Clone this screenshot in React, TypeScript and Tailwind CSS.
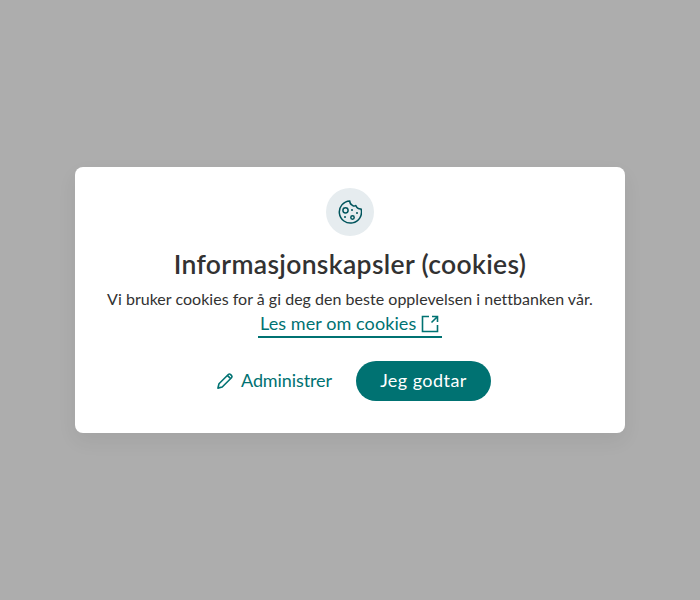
function CookieIcon() {
  return (
    <svg width="24" height="24" viewBox="0 0 24 24" fill="none" stroke="#00545c" strokeWidth="1.5" strokeLinejoin="round">
      <path d="M11.8.9A11.1 11.1 0 1 0 23.1 9Q19.100 9.200 17.800 5.500Q16.200 6.700 14.500 5.400Q11.600 4.200 11.800.9Z" />
      <circle cx="7.500" cy="10.300" r="2.600" />
      <circle cx="14.500" cy="17.500" r="1.700" />
      <g fill="#00545c" stroke="none">
        <circle cx="14" cy="10" r="1" />
        <circle cx="19" cy="13" r="1" />
        <circle cx="7" cy="17" r="1" />
      </g>
    </svg>
  );
}

function ExternalIcon() {
  return (
    <svg width="18" height="18" viewBox="0 0 18 18" fill="none" stroke="#007272" strokeWidth="1.600" className="-ml-px shrink-0">
      <path d="M8 1.500H1.500V16.500H16.500V10M11 1.500H16.500V7M16.300 1.700L10.500 7.500" />
    </svg>
  );
}

function PencilIcon() {
  return (
    <svg width="16" height="16" viewBox="0 0 16 16" fill="none" stroke="#007272" strokeWidth="1.600" strokeLinejoin="round" className="shrink-0 translate-y-px">
      <path d="M.9 15.100L2 10.800L11.300 1.500Q12.300.6 13.400 1.400L14.600 2.600Q15.400 3.700 14.500 4.700L5.200 14ZM10.400 2.400L13.600 5.600" />
    </svg>
  );
}

export default function App() {
  return (
    <div className="flex h-[600px] w-[700px] items-center justify-center bg-[#adadad] font-['Lato','Liberation_Sans',sans-serif] text-[#323232]">
      <div className="flex h-[266px] w-[550px] flex-col items-center rounded-lg bg-white pt-[21px] shadow-[0_8px_20px_rgba(0,0,0,0.06)]">
        <div className="flex size-12 items-center justify-center rounded-full bg-[#e6ecef]">
          <CookieIcon />
        </div>
        <h1 className="mt-3 whitespace-nowrap text-[26.5px] leading-8 font-semibold tracking-[0.34px]">Informasjonskapsler (cookies)</h1>
        <p className="mt-[7px] whitespace-nowrap text-base leading-6 tracking-[0.02px]">
          Vi bruker cookies for å gi deg den beste opplevelsen i nettbanken vår.
        </p>
        <a className="flex h-[27px] w-[184px] items-center gap-1.5 border-b-2 border-[#007272] pl-0.5 text-lg text-[#007272]">
          <span className="w-[156px] pb-0.5 whitespace-nowrap tracking-[0.08px]">Les mer om cookies</span>
          <ExternalIcon />
        </a>
        <div className="mt-[23px] ml-2 flex h-10 w-[274px] items-center text-lg leading-6 text-[#007272]">
          <button className="flex w-[139px] items-center gap-2 pb-0.5">
            <PencilIcon />
            <span className="whitespace-nowrap tracking-[-0.1px]">Administrer</span>
          </button>
          <button className="h-10 w-[135px] rounded-full bg-[#007272] pb-0.5 tracking-[0.45px] text-white">Jeg godtar</button>
        </div>
      </div>
    </div>
  );
}
